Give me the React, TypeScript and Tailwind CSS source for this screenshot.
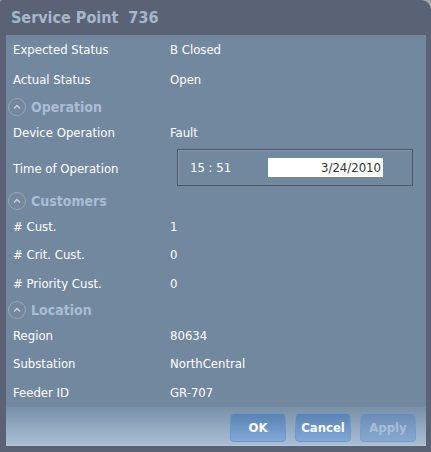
import React from 'react';

const font = { fontFamily: '"DejaVu Sans Condensed", "DejaVu Sans", sans-serif' };

const Row: React.FC<{ label: string; value: string; h: string }> = ({ label, value, h }) => (
  <div className={`flex items-center ${h}`}>
    <div className="w-[164px] pl-[7px] text-white">{label}</div>
    <div className="text-white">{value}</div>
  </div>
);

const Section: React.FC<{ title: string; h: string }> = ({ title, h }) => (
  <div className={`flex items-center ${h}`}>
    <div className="ml-[2px] flex h-[18px] w-[18px] items-center justify-center rounded-full border border-[#9aa6b4]">
      <svg width="8" height="6" viewBox="0 0 8 6">
        <path d="M1 4.5 L4 1.5 L7 4.5" stroke="#c9d3de" strokeWidth="1.4" fill="none" />
      </svg>
    </div>
    <span className="ml-[5px] text-[14px] font-bold text-[#a9bed6]">{title}</span>
  </div>
);

export default function App() {
  return (
    <div className="h-[452px] w-[431px] bg-[#9ea3ab]">
      <div className="flex h-[452px] w-[431px] flex-col rounded-tr-[10px] rounded-tl-[3px] bg-[#5a6376] text-[13px]" style={font}>
        <div className="flex h-[35px] items-center pl-[11px] text-[16px] font-bold text-[#a7b7cb]">
          Service Point&nbsp;&nbsp;736
        </div>
        <div className="ml-[6px] flex h-[411px] w-[420px] flex-col bg-[#72889f]">
          <Row label="Expected Status" value="B Closed" h="h-[30px]" />
          <Row label="Actual Status" value="Open" h="h-[29px]" />
          <Section title="Operation" h="h-[26px]" />
          <Row label="Device Operation" value="Fault" h="h-[26px]" />
          <div className="flex h-[43px] items-center">
            <div className="w-[164px] pl-[7px] pt-[3px] text-white">Time of Operation</div>
            <div className="ml-[7px] flex h-[37px] w-[236px] items-center border border-[#4e5867] shadow-[inset_1px_1px_0_#8396aa]">
              <span className="ml-[12px] w-[78px] text-white">15 : 51</span>
              <div className="flex h-[19px] w-[115px] items-center justify-end bg-white pr-[2px] text-[#333]">
                3/24/2010
              </div>
            </div>
          </div>
          <Section title="Customers" h="h-[24px]" />
          <Row label="# Cust." value="1" h="h-[27px]" />
          <Row label="# Crit. Cust." value="0" h="h-[29px]" />
          <Row label="# Priority Cust." value="0" h="h-[29px]" />
          <Section title="Location" h="h-[24px]" />
          <Row label="Region" value="80634" h="h-[28px]" />
          <Row label="Substation" value="NorthCentral" h="h-[28px]" />
          <Row label="Feeder ID" value="GR-707" h="h-[29px]" />
          <div className="flex h-[39px] items-start justify-end gap-[9px] border-b border-[#b4c4d6] bg-gradient-to-b from-[#7790a8] to-[#aabfd5] pr-[10px] pt-[6px]">
            <button className="h-[29px] w-[56px] rounded-[4px] border border-[#6f98c6] bg-gradient-to-b from-[#5a82b1] to-[#80a9da] font-bold text-white">
              OK
            </button>
            <button className="h-[29px] w-[56px] rounded-[4px] border border-[#6f98c6] bg-gradient-to-b from-[#5a82b1] to-[#80a9da] font-bold text-white">
              Cancel
            </button>
            <button className="h-[29px] w-[56px] rounded-[4px] border border-[#7a9cc2] bg-gradient-to-b from-[#6a8cb5] to-[#86a9d2] font-bold text-[#a9bdd5]">
              Apply
            </button>
          </div>
        </div>
      </div>
    </div>
  );
}
